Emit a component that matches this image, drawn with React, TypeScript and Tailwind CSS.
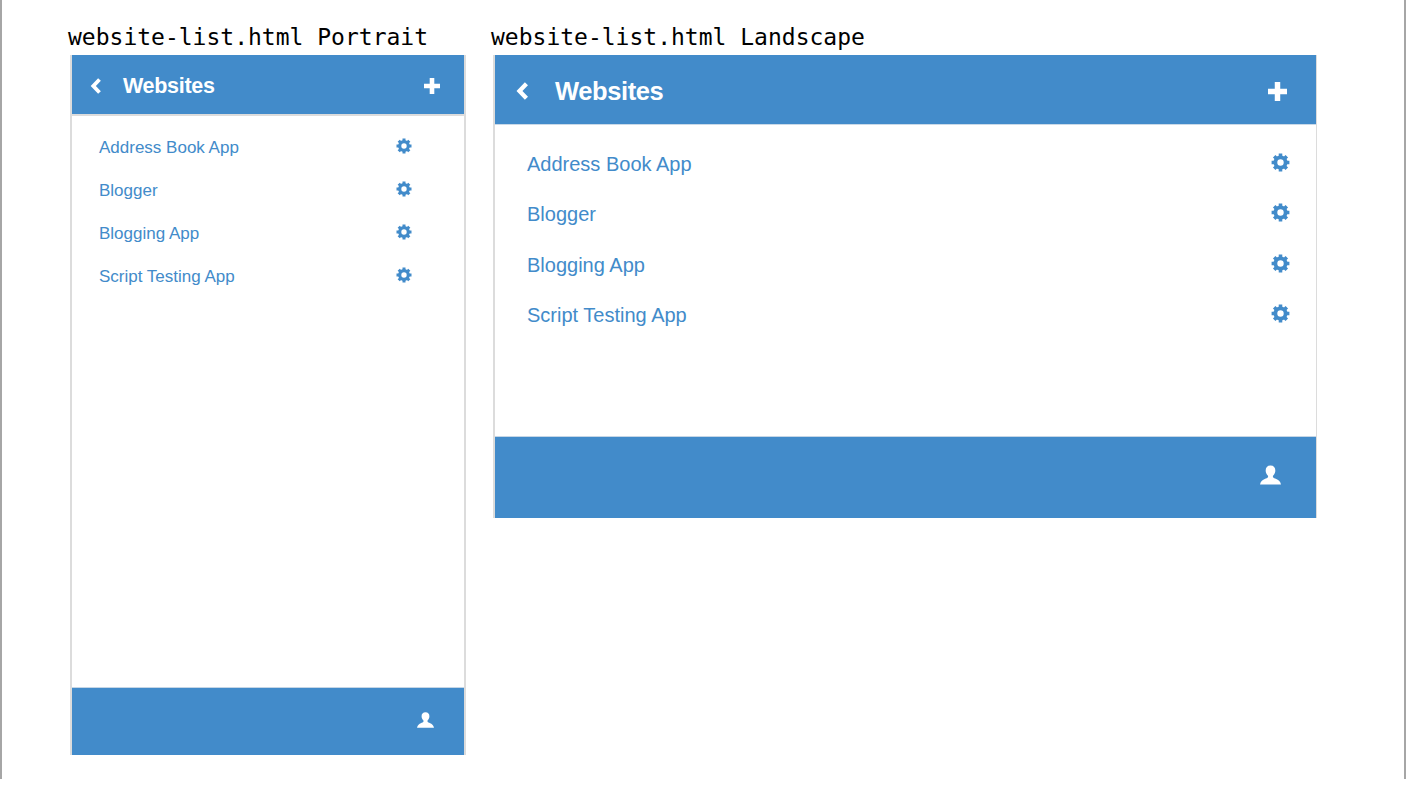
const apps = ["Address Book App", "Blogger", "Blogging App", "Script Testing App"];

function UserIcon({ className }: { className: string }) {
  return (
    <svg viewBox="0 0 20 18" className={className} fill="currentColor">
      <path d="M10 0C6.900 0 5.400 2 5.400 4.600c0 2 .8 3.600 2 4.800.4.400.4 1.300.1 1.800-.4.700-1.500 1.100-3 1.700C2.800 13.700.6 15 0 18h20c-.6-3-2.800-4.300-4.500-5.100-1.500-.6-2.600-1-3-1.700-.3-.5-.3-1.400.1-1.800 1.200-1.200 2-2.800 2-4.800C14.600 2 13.100 0 10 0z" />
    </svg>
  );
}

function GearIcon({ className }: { className: string }) {
  return (
    <svg viewBox="0 0 16 16" className={className} fill="none" stroke="currentColor">
      <circle cx="8" cy="8" r="4.300" strokeWidth="3.200" />
      <path
        d="M8 .5v3M8 12.500v3M.5 8h3M12.500 8h3M2.700 2.700l2.100 2.100M11.200 11.200l2.100 2.100M2.700 13.300l2.100-2.100M11.200 4.800l2.100-2.100"
        strokeWidth="3"
      />
    </svg>
  );
}

function ChevronIcon({ className }: { className: string }) {
  return (
    <svg viewBox="0 0 12 16" className={className} fill="none" stroke="currentColor">
      <path d="M9.500 1.500 3.300 8l6.200 6.500" strokeWidth="3.800" />
    </svg>
  );
}

function PlusIcon({ className }: { className: string }) {
  return (
    <svg viewBox="0 0 16 16" className={className} fill="currentColor">
      <path d="M5.700 0h4.600v5.700H16v4.600h-5.700V16H5.700v-5.700H0V5.700h5.700z" />
    </svg>
  );
}

function Portrait() {
  return (
    <div className="flex w-[396px] flex-col">
      <div className="-ml-[2px] h-[55px] pt-[24px] text-[23px] leading-[26px] whitespace-pre text-black [font-family:'DejaVu_Sans_Mono',monospace]">
        website-list.html Portrait
      </div>
      <div className="flex h-[700px] flex-col border-x-2 border-[#dcdcdc]">
        <div className="flex h-[59px] items-center bg-[#428bca] pt-[2px] pr-[24px] pl-[18px] text-white">
          <ChevronIcon className="h-[16px] w-[12px]" />
          <span className="mt-[1px] ml-[21px] flex-1 text-[21.500px] font-bold tracking-[-0.3px]">Websites</span>
          <PlusIcon className="h-[16px] w-[16px]" />
        </div>
        <div className="flex flex-1 flex-col border-t-2 border-[#dcdcdc] bg-white pt-[10px]">
          {apps.map((a) => (
            <div key={a} className="flex h-[43px] items-center pr-[52px] pl-[27px] text-[#428bca]">
              <span className="flex-1 text-[17px]">{a}</span>
              <GearIcon className="-mt-[3px] h-[16px] w-[16px]" />
            </div>
          ))}
        </div>
        <div className="flex h-[68px] items-center justify-end border-t border-[#c5d6e6] bg-[#428bca] pr-[30px] text-white">
          <UserIcon className="-mt-[3px] h-[16px] w-[17px]" />
        </div>
      </div>
    </div>
  );
}

function Landscape() {
  return (
    <div className="flex w-[824px] flex-col">
      <div className="-ml-[2px] h-[55px] pt-[24px] text-[23px] leading-[26px] whitespace-pre text-black [font-family:'DejaVu_Sans_Mono',monospace]">
        website-list.html Landscape
      </div>
      <div className="flex h-[463px] flex-col border-r border-l-2 border-[#dcdcdc]">
        <div className="flex h-[69px] items-center bg-[#428bca] pt-[3px] pr-[29px] pl-[20px] text-white">
          <ChevronIcon className="h-[18px] w-[15px]" />
          <span className="ml-[25px] flex-1 text-[25.500px] font-bold tracking-[-0.4px]">Websites</span>
          <PlusIcon className="h-[19px] w-[19px]" />
        </div>
        <div className="flex flex-1 flex-col border-t border-[#c9d9e8] bg-white pt-[14px]">
          {apps.map((a) => (
            <div key={a} className="flex h-[50.300px] items-center pr-[26px] pl-[32px] text-[#428bca]">
              <span className="flex-1 text-[20px]">{a}</span>
              <GearIcon className="-mt-[3px] h-[19px] w-[19px]" />
            </div>
          ))}
        </div>
        <div className="flex h-[82px] items-center justify-end border-t border-[#c5d6e6] bg-[#428bca] pr-[35px] text-white">
          <UserIcon className="-mt-[5px] h-[20px] w-[21px]" />
        </div>
      </div>
    </div>
  );
}

export default function App() {
  return (
    <div className="h-[788px] w-[1406px] overflow-hidden bg-white [font-family:'Liberation_Sans',sans-serif]">
      <div className="flex h-[779px] gap-[27px] border-r-2 border-l-2 border-[#a6a6a6] pl-[68px]">
        <Portrait />
        <Landscape />
      </div>
    </div>
  );
}
